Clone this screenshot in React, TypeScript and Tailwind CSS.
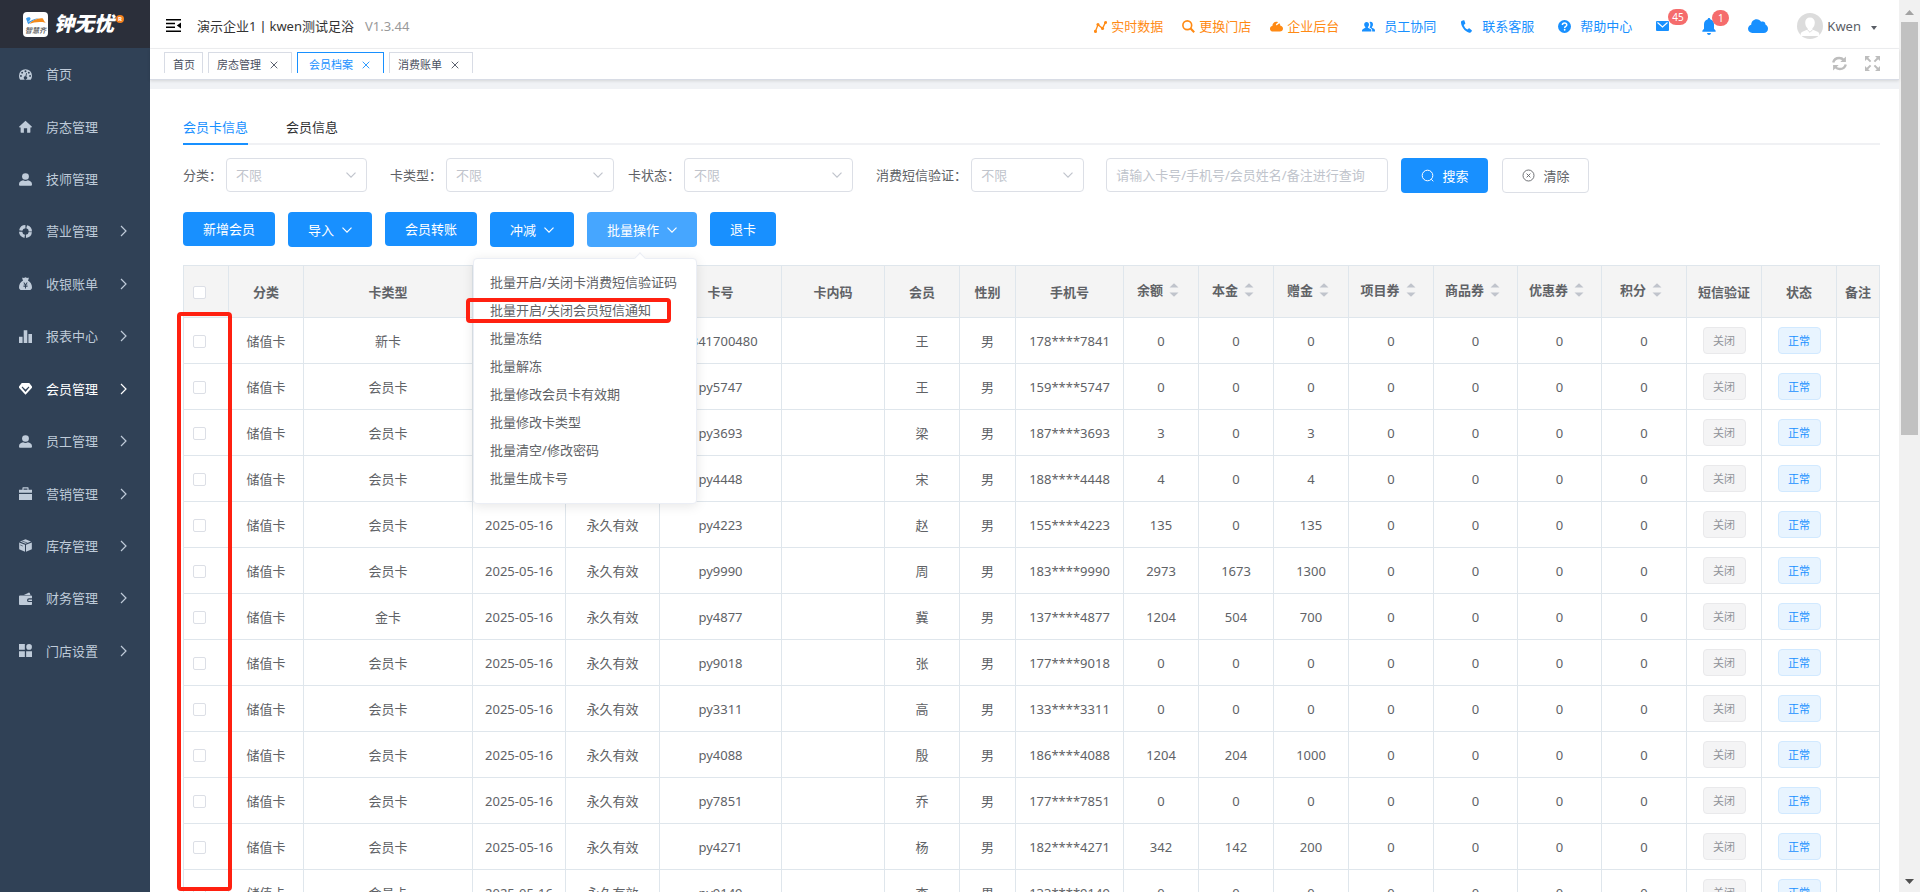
import React, { useState } from 'react';

const svgBase = { viewBox: '0 0 16 16', fill: 'currentColor', 'aria-hidden': true } as const;
type IconProps = { className?: string };

const GaugeIcon = ({ className = 'size-[13px]' }: IconProps) => (
  <svg {...svgBase} className={className}>
    <path
      fillRule="evenodd"
      d="M8 1.4a8 8 0 0 0-8 8c0 1.9.6 3.600 1.500 5h13a8 8 0 0 0 1.500-5 8 8 0 0 0-8-8zM8 2.800a1.200 1.200 0 1 1 0 2.400 1.200 1.200 0 0 1 0-2.400zM3.900 4.500a1.200 1.200 0 1 1 0 2.400 1.200 1.200 0 0 1 0-2.400zM2.400 8.500a1.200 1.200 0 1 1 0 2.400 1.200 1.200 0 0 1 0-2.400zM13.600 8.500a1.200 1.200 0 1 1 0 2.400 1.200 1.200 0 0 1 0-2.400zM12.100 4.500a1.200 1.200 0 1 1 0 2.400 1.200 1.200 0 0 1 0-2.400zM8.800 6.200l1 .3-.8 3.900a2 2 0 1 1-1.100-.3z"
    />
  </svg>
);
const HomeIcon = ({ className = 'size-[13px]' }: IconProps) => (
  <svg {...svgBase} className={className}>
    <path d="M8 .8 16 8.300l-.7.9H14V15a.6.6 0 0 1-.6.6H10V10H6v5.600H2.600A.6.6 0 0 1 2 15V9.200H.7L0 8.300z" />
  </svg>
);
const PersonIcon = ({ className = 'size-[13px]' }: IconProps) => (
  <svg {...svgBase} className={className}>
    <ellipse cx="8" cy="4.300" rx="4.200" ry="4.100" />
    <path d="M0 13.700c0-3 2.600-4.200 5-4.700.9.500 1.900.7 3 .7s2.100-.2 3-.7c2.400.5 5 1.700 5 4.700 0 1.300-.6 2-1.800 2H1.800c-1.200 0-1.800-.7-1.800-2z" />
  </svg>
);
const RingIcon = ({ className = 'size-[13px]' }: IconProps) => (
  <svg viewBox="0 0 16 16" fill="none" stroke="currentColor" aria-hidden className={className}>
    <circle cx="8" cy="8" r="6" strokeWidth="4" strokeDasharray="7.800 1.625" strokeDashoffset="-.8" />
  </svg>
);
const MoneyBagIcon = ({ className = 'size-[13px]' }: IconProps) => (
  <svg {...svgBase} className={className}>
    <path
      fillRule="evenodd"
      d="M4.300.6 6 1.200 8 .3l2 .9 1.700-.6.3 1.600-1 2.100c3 1.500 5 5 5 8.200 0 2.300-1.200 3.500-3.500 3.500h-9C1.200 16 0 14.800 0 12.500 0 9.300 2 5.800 5 4.300L4 2.200zM5.300 6.800l1.800 2.600H5.500v1h1.900v.9H5.500v1h1.900V14h1.200v-1.700h1.900v-1H8.600v-.9h1.900v-1H8.900l1.800-2.600H9.300L8 9 6.700 6.800z"
    />
  </svg>
);
const BarsIcon = ({ className = 'size-[13px]' }: IconProps) => (
  <svg {...svgBase} className={className}>
    <path d="M0 8.200h4.400V16H0zM5.800.4h4.400V16H5.800zM11.600 5h4.400v11h-4.400z" />
  </svg>
);
const DiamondIcon = ({ className = 'size-[13px]' }: IconProps) => (
  <svg {...svgBase} className={className}>
    <path
      fillRule="evenodd"
      d="M3.400 1.200h9.200L16 5.500v1.700L8 15.600 0 7.200V5.500zM4 5.400 3.200 6.500 8 12.200l4.800-5.700-.8-1.100L8 9.200z"
    />
  </svg>
);
const CaseIcon = ({ className = 'size-[13px]' }: IconProps) => (
  <svg {...svgBase} className={className}>
    <path
      fillRule="evenodd"
      d="M4.200 3.400V1.200c0-.5.300-.8.800-.8h6c.5 0 .8.300.8.800v2.200H16v3.800H0V3.400zm1.400 0h4.800V1.800H5.600zM0 8.600h16V16H0z"
    />
  </svg>
);
const CubeIcon = ({ className = 'size-[13px]' }: IconProps) => (
  <svg {...svgBase} className={className}>
    <path d="M8 .2 14.800 3 8 5.900 1.200 3zM.2 4.200l7.200 3v8.600L.2 12.600zM15.800 4.200l-7.200 3v8.600l7.200-3.200z" />
    <path d="M3 2.200 10.500 5M1.500 7.300l3.200 1.400" stroke="#304156" strokeWidth=".8" />
  </svg>
);
const WalletIcon = ({ className = 'size-[13px]' }: IconProps) => (
  <svg {...svgBase} className={className}>
    <path d="M6 3.600 11.800.8c.6-.3 1.200 0 1.400.5l.9 2.300z" />
    <path d="M1.200 4.300H15c.6 0 1 .4 1 1v2.500h-3.800a2.300 2.300 0 0 0 0 4.600H16V15c0 .6-.4 1-1 1H1.200C.4 16 0 15.600 0 15V5.300c0-.6.4-1 1.200-1z" />
    <path d="M12.400 9.100H16v2.100h-3.600a1 1 0 0 1 0-2.100z" />
  </svg>
);
const AppsIcon = ({ className = 'size-[13px]' }: IconProps) => (
  <svg {...svgBase} className={className}>
    <path d="M0 0h7.200v7.200H0zM0 8.800h7.200V16H0zM8.800 8.800H16V16H8.800z" />
    <circle cx="12.400" cy="3.600" r="3.500" />
  </svg>
);
const ChevronRight = ({ className = '' }: IconProps) => (
  <svg viewBox="0 0 7 12" fill="none" stroke="currentColor" strokeWidth="1.200" aria-hidden className={className}>
    <path d="M1 1l5 5-5 5" />
  </svg>
);
const ChevronDown = ({ className = '' }: IconProps) => (
  <svg viewBox="0 0 10 6" fill="none" stroke="currentColor" strokeWidth="1.200" aria-hidden className={className}>
    <path d="M.5.6 5 5.100 9.500.6" />
  </svg>
);
const TrendIcon = ({ className = 'size-[13px]' }: IconProps) => (
  <svg {...svgBase} className={className}>
    <path d="M1.800 13.800 4.900 5.800l5.600 4.500L14 3.200" fill="none" stroke="currentColor" strokeWidth="1.600" />
    <circle cx="1.800" cy="14" r="1.900" />
    <circle cx="4.900" cy="5.600" r="1.900" />
    <circle cx="10.500" cy="10.400" r="1.900" />
    <circle cx="14.200" cy="3" r="1.900" />
  </svg>
);
const SearchBoldIcon = ({ className = 'size-[13px]' }: IconProps) => (
  <svg viewBox="0 0 16 16" fill="none" stroke="currentColor" aria-hidden className={className}>
    <circle cx="6.500" cy="6.500" r="5.400" strokeWidth="2" />
    <path d="M10.600 10.600l4.400 4.400" strokeWidth="2.600" />
  </svg>
);
const CloudIcon = ({ className = 'size-[13px]' }: IconProps) => (
  <svg viewBox="0 0 20 14" fill="currentColor" aria-hidden className={className}>
    <path d="M4.500 14A4.400 4.400 0 0 1 0 9.800C0 7.800 1.400 6.200 3.200 5.700 3.300 2.500 5.600.2 8.600.2c2 0 3.600 1 4.500 2.600.5-.3 1-.4 1.600-.4 1.700 0 2.900 1.400 2.700 3.200C19 6.300 20 7.900 20 9.700 20 12.200 18.200 14 15.700 14z" />
  </svg>
);
const CloudPuffIcon = ({ className = 'size-[13px]' }: IconProps) => (
  <svg {...svgBase} className={className}>
    <path d="M3.800 14.200C1.500 14.200 0 12.800 0 10.700c0-1.800 1.200-3.100 2.900-3.300C3 4.200 5 2.200 7.800 2.200c.8 0 1.500.2 2.100.5L7.200 5.300l.9 1.600 3.400-2.800c.7.7 1.200 1.700 1.300 2.900 1.900.3 3.200 1.700 3.200 3.500 0 2.200-1.600 3.700-3.900 3.700z" />
  </svg>
);
const TeamIcon = ({ className = 'size-[13px]' }: IconProps) => (
  <svg {...svgBase} className={className}>
    <path d="M5.600 2.400c1.900 0 3 1.300 3 3.200 0 1.300-.5 2.400-1.300 3v1l3 1.400c.9.400 1.200 1 1.200 2v1H0v-1c0-1 .5-1.600 1.300-2l2.800-1.400v-1c-.9-.6-1.400-1.700-1.400-3 0-1.900 1.100-3.200 2.900-3.200z" />
    <path d="M9.200 2.600c.4-.2.9-.3 1.400-.3 1.800 0 2.900 1.300 2.900 3.200 0 1.300-.5 2.400-1.300 3v1l2.600 1.400c.8.400 1.200 1 1.200 2V14h-3.500v-1c0-1.500-.6-2.300-1.700-2.900L9.300 9.300c.6-.9 1-2.100 1-3.400 0-1.300-.4-2.400-1.100-3.300z" />
  </svg>
);
const PhoneIcon = ({ className = 'size-[13px]' }: IconProps) => (
  <svg {...svgBase} className={className}>
    <path d="M2.500.8 4.400.2c.5-.1.900.1 1 .5l1.100 3.200c.2.500 0 .9-.4 1.100L4.600 6c.7 2.300 2.300 4.500 4.500 5.700l1.500-1.200c.3-.3.800-.3 1.200 0l2.600 2c.4.300.4.800.1 1.200l-1.200 1.500c-.5.600-1.300.8-2 .5C5.500 13.700 1.500 8.300 1.200 2.800 1.100 1.900 1.600 1.100 2.500.8z" />
  </svg>
);
const HelpIcon = ({ className = 'size-[13px]' }: IconProps) => (
  <svg viewBox="0 0 16 16" aria-hidden className={className}>
    <circle cx="8" cy="8" r="8" fill="currentColor" />
    <path d="M5.400 6.300c0-1.600 1.100-2.600 2.700-2.600s2.700.9 2.700 2.300c0 1.900-2.600 1.900-2.600 3.800" fill="none" stroke="#fff" strokeWidth="1.800" />
    <circle cx="8.200" cy="12" r="1.100" fill="#fff" />
  </svg>
);
const MailIcon = ({ className = '' }: IconProps) => (
  <svg viewBox="0 0 13 10" aria-hidden className={className}>
    <rect width="13" height="10" rx="1" fill="currentColor" />
    <path d="M1.500 1.500l5 4.500 5-4.500" fill="none" stroke="#fff" strokeWidth="1.100" />
  </svg>
);
const BellIcon = ({ className = '' }: IconProps) => (
  <svg viewBox="0 0 14 17" fill="currentColor" aria-hidden className={className}>
    <path d="M7 0c.8 0 1.200.5 1.200 1.200C10.500 1.800 12 3.800 12 6.300v4.500l1.500 1.700c.5.600.3 1.300-.5 1.300H1c-.8 0-1-.7-.5-1.300L2 10.800V6.300c0-2.500 1.500-4.500 3.800-5.100C5.800.5 6.200 0 7 0zM5 15h4c-.2 1.200-.9 1.900-2 1.900S5.200 16.200 5 15z" />
  </svg>
);
const RefreshIcon = ({ className = '' }: IconProps) => (
  <svg viewBox="0 0 15 15" fill="none" stroke="currentColor" aria-hidden className={className}>
    <path d="M1.200 6.500C2 3.500 4.500 2 7.200 2c2 0 3.400.7 4.500 2" strokeWidth="2.400" />
    <path d="M13.800 8.500c-.8 3-3.300 4.500-6 4.500-2 0-3.400-.7-4.500-2" strokeWidth="2.400" />
    <path d="M13.900.5v5.600H8.300zM1.100 14.500V8.900h5.600z" fill="currentColor" stroke="none" />
  </svg>
);
const ExpandIcon = ({ className = '' }: IconProps) => (
  <svg viewBox="0 0 15 15" aria-hidden className={className}>
    <path d="M0 0h5L0 5zM15 0v5l-5-5zM0 15v-5l5 5zM15 15h-5l5-5z" fill="currentColor" />
    <path d="M2 2l3.600 3.600M13 2 9.400 5.600M2 13l3.600-3.600M13 13 9.400 9.400" stroke="currentColor" strokeWidth="2" />
  </svg>
);
const CollapseIcon = ({ className = '' }: IconProps) => (
  <svg viewBox="0 0 15 13" fill="currentColor" aria-hidden className={className}>
    <path d="M0 0h15v1.500H0zM0 3.800h9v1.500H0zM0 7.600h9v1.500H0zM0 11.500h15V13H0zM15 3.400v6.200l-4.200-3.100z" />
  </svg>
);
const CloseIcon = ({ className = 'size-[7px]' }: IconProps) => (
  <svg viewBox="0 0 8 8" fill="none" stroke="currentColor" strokeWidth=".9" aria-hidden className={className}>
    <path d="M.7.7l6.600 6.600M7.300.7.7 7.300" />
  </svg>
);
const AvatarIcon = ({ className = '' }: IconProps) => (
  <svg viewBox="0 0 26 26" aria-hidden className={className}>
    <circle cx="13" cy="13" r="13" fill="#dcdcdc" />
    <path d="M13 4.500c3 0 4.800 2 4.800 5 0 2.500-1 4.600-2.400 5.800v1.300l5.200 2.200c1.200.5 1.800 1.500 1.800 3v1.100H3.600v-1.100c0-1.500.6-2.500 1.800-3l5.200-2.200v-1.300C9.200 14.100 8.200 12 8.200 9.500c0-3 1.800-5 4.800-5z" fill="#fff" />
    <path d="M10.200 16.500 13 19.300l2.800-2.800" fill="none" stroke="#dcdcdc" />
  </svg>
);

const menu = [
  { label: '首页', Icon: GaugeIcon, sub: false },
  { label: '房态管理', Icon: HomeIcon, sub: false },
  { label: '技师管理', Icon: PersonIcon, sub: false },
  { label: '营业管理', Icon: RingIcon, sub: true },
  { label: '收银账单', Icon: MoneyBagIcon, sub: true },
  { label: '报表中心', Icon: BarsIcon, sub: true },
  { label: '会员管理', Icon: DiamondIcon, sub: true },
  { label: '员工管理', Icon: PersonIcon, sub: true },
  { label: '营销管理', Icon: CaseIcon, sub: true },
  { label: '库存管理', Icon: CubeIcon, sub: true },
  { label: '财务管理', Icon: WalletIcon, sub: true },
  { label: '门店设置', Icon: AppsIcon, sub: true },
];

function Sidebar() {
  return (
    <aside className="flex w-[150px] shrink-0 flex-col bg-[#304156]">
      <div className="flex h-12 shrink-0 items-center bg-[#2b2f3a] pl-[23px]">
        <svg viewBox="0 0 25 25" className="size-[25px]" aria-hidden>
          <rect width="25" height="25" rx="4" fill="#fff" />
          <path d="M3 6.500c2-2 5-1.500 4.500.5-.3 1.500-2 2.800-3.800 4 4-2.500 8-4.500 12-4.800-4 1.500-8 3.500-10.500 6z" fill="#3a9bec" />
          <path d="M6 12c4-4 9-6.200 14-5.500.6 1.500 1.300 3 3 4.500-2-.6-3-1-4.500-1C14 9.600 10 10.500 6 12z" fill="#f28a1c" />
          <text x="2" y="21" fontSize="7" fontStyle="italic" fontWeight="700" fill="#666" className="font-['Noto_Sans_CJK_SC',sans-serif]">
            智慧齐
          </text>
        </svg>
        <span className="ml-[6px] text-[20px] leading-6 font-black text-white italic">钟无忧</span>
        <span className="mb-[10px] ml-[2px] flex size-2 items-center justify-center rounded-full bg-[#f5811f] text-[6px] leading-none font-bold text-white">R</span>
      </div>
      <nav className="grid h-[629px] shrink-0 grid-rows-12">
        {menu.map(({ label, Icon, sub }) => (
          <a
            key={label}
            href="#"
            className={`flex items-center pr-[23px] pl-[19px] ${label === '会员管理' ? 'text-white' : 'text-[#bfcbd9]'}`}
          >
            <Icon />
            <span className="ml-[14px]">{label}</span>
            {sub && <ChevronRight className="ml-auto h-3 w-[7px]" />}
          </a>
        ))}
      </nav>
    </aside>
  );
}

function Header() {
  return (
    <header className="flex h-[49px] shrink-0 items-center border-b border-[#f0f1f3] pt-1 pr-[21px] pl-4">
      <button type="button" aria-label="收起菜单" className="mb-[2px] text-black">
        <CollapseIcon className="h-[13px] w-[15px]" />
      </button>
      <span className="ml-4 text-[#333]">演示企业1丨kwen测试足浴</span>
      <span className="ml-[11px] text-[#999]">V1.3.44</span>
      <div className="ml-auto flex items-center">
        <div className="flex items-center gap-[19px] text-[#ff8a14]">
          <a href="#" className="flex items-center gap-1"><TrendIcon />实时数据</a>
          <a href="#" className="flex items-center gap-1"><SearchBoldIcon />更换门店</a>
          <a href="#" className="flex items-center gap-1"><CloudPuffIcon />企业后台</a>
        </div>
        <div className="ml-[23px] flex items-center gap-6 text-[#1890ff]">
          <a href="#" className="flex items-center gap-[9px]"><TeamIcon />员工协同</a>
          <a href="#" className="flex items-center gap-[9px]"><PhoneIcon />联系客服</a>
          <a href="#" className="flex items-center gap-[9px]"><HelpIcon />帮助中心</a>
          <button type="button" aria-label="消息" className="relative">
            <MailIcon className="h-[10px] w-[13px]" />
            <span className="absolute -top-3 left-3 flex h-4 items-center rounded-full bg-[#f56c6c] px-1 text-[10px] leading-4 text-white">45</span>
          </button>
        </div>
        <button type="button" aria-label="通知" className="relative ml-[33px] text-[#1890ff]">
          <BellIcon className="h-[17px] w-[14px]" />
          <span className="absolute -top-2 left-[10px] flex h-4 w-[17px] items-center justify-center rounded-full bg-[#f56c6c] text-[10px] leading-4 text-white">1</span>
        </button>
        <button type="button" aria-label="云端" className="ml-8 text-[#1890ff]">
          <CloudIcon className="h-[14px] w-5" />
        </button>
        <button type="button" className="ml-[29px] flex items-center text-[#5a5e66]">
          <AvatarIcon className="size-[26px]" />
          <span className="ml-1">Kwen</span>
          <svg viewBox="0 0 8 4" className="mt-[3px] ml-[9px] h-1 w-2" fill="currentColor" aria-hidden><path d="M1 0h6L4 4z" /></svg>
        </button>
      </div>
    </header>
  );
}

function TabStrip() {
  const tabs = ['房态管理', '会员档案', '消费账单'];
  return (
    <div className="z-10 flex h-[31px] shrink-0 items-start border-b border-[#d8dce5] bg-white pt-[3px] pr-[19px] pl-[14px] text-[11px] shadow-[0_1px_3px_rgba(0,0,0,0.12)]">
      <a href="#" className="flex h-[21px] items-center border border-b-0 border-[#d8dce5] pt-1 pr-[7px] pl-2 text-[#495060]">首页</a>
      {tabs.map((t) => (
        <a
          key={t}
          href="#"
          className={`ml-[5px] flex h-[21px] items-center border border-b-0 pt-1 ${
            t === '会员档案' ? 'border-[#1890ff] pr-[13px] pl-[11px] text-[#1890ff]' : 'border-[#d8dce5] pr-[13px] pl-2 text-[#495060]'
          }`}
        >
          {t}
          <CloseIcon className="mb-px ml-[9px] size-[8px]" />
        </a>
      ))}
      <div className="ml-auto flex gap-[18px] text-[#bdbdbd]">
        <button type="button" aria-label="刷新" className="pt-1"><RefreshIcon className="size-[15px]" /></button>
        <button type="button" aria-label="全屏" className="pt-1"><ExpandIcon className="size-[15px]" /></button>
      </div>
    </div>
  );
}

function SelectField({ id, label, width }: { id: string; label: string; width: string }) {
  return (
    <div className="flex items-center gap-1">
      <label htmlFor={id} className="whitespace-nowrap text-[#606266]">{label}：</label>
      <div className={`relative ${width}`}>
        <select id={id} className="block h-[34px] w-full appearance-none rounded border border-[#dcdfe6] bg-white px-[9px] text-[#c0c4cc]">
          <option>不限</option>
        </select>
        <ChevronDown className="pointer-events-none absolute top-[14px] right-[11px] h-[6px] w-[10px] text-[#c0c4cc]" />
      </div>
    </div>
  );
}

function Filters() {
  return (
    <form className="mt-[13px] flex items-start" onSubmit={(e) => e.preventDefault()}>
      <SelectField id="category" label="分类" width="w-[141px]" />
      <div className="ml-[23px]"><SelectField id="cardType" label="卡类型" width="w-[168px]" /></div>
      <div className="ml-[14px]"><SelectField id="cardState" label="卡状态" width="w-[169px]" /></div>
      <div className="ml-[23px]"><SelectField id="smsCheck" label="消费短信验证" width="w-[113px]" /></div>
      <input
        aria-label="查询"
        placeholder="请输入卡号/手机号/会员姓名/备注进行查询"
        className="ml-[22px] h-[34px] w-[282px] rounded border border-[#dcdfe6] px-[9px] placeholder:text-[#c0c4cc]"
      />
      <button type="submit" className="ml-[13px] flex h-[35px] w-[87px] items-center justify-center gap-[9px] rounded bg-[#1890ff] text-white">
        <svg viewBox="0 0 13 13" className="size-[13px]" fill="none" stroke="currentColor" aria-hidden>
          <circle cx="6.500" cy="6.500" r="5.300" />
          <path d="M10.300 10.300l2 2" />
        </svg>
        搜索
      </button>
      <button type="reset" className="ml-[14px] flex h-[35px] w-[87px] items-center justify-center gap-[9px] rounded border border-[#dcdfe6] bg-white text-[#606266]">
        <svg viewBox="0 0 13 13" className="size-[13px]" fill="none" stroke="currentColor" strokeWidth=".9" aria-hidden>
          <circle cx="6.500" cy="6.500" r="5.500" />
          <path d="M4.600 4.600l3.800 3.800M8.400 4.600 4.600 8.400" />
        </svg>
        清除
      </button>
    </form>
  );
}

const batchItems = [
  '批量开启/关闭卡消费短信验证码',
  '批量开启/关闭会员短信通知',
  '批量冻结',
  '批量解冻',
  '批量修改会员卡有效期',
  '批量修改卡类型',
  '批量清空/修改密码',
  '批量生成卡号',
];

function Actions() {
  const [open, setOpen] = useState(true);
  const plain = 'h-[34px] rounded bg-[#1890ff] px-5 text-white';
  const drop = 'flex h-[35px] items-center gap-2 rounded px-5 text-white';
  return (
    <div className="mt-[19px] flex items-start gap-[13px]">
      <button type="button" className={plain}>新增会员</button>
      <button type="button" className={`${drop} bg-[#1890ff]`}>导入<ChevronDown className="h-[6px] w-[10px]" /></button>
      <button type="button" className={plain}>会员转账</button>
      <button type="button" className={`${drop} bg-[#1890ff]`}>冲减<ChevronDown className="h-[6px] w-[10px]" /></button>
      <div className="relative z-20">
        <button type="button" onClick={() => setOpen(!open)} className={`${drop} bg-[#46a6ff]`}>
          批量操作<ChevronDown className="h-[6px] w-[10px]" />
        </button>
        {open && (
          <ul className="absolute top-[46px] right-0 w-[224px] rounded border border-[#ebeef5] bg-white pt-[9px] pb-[11px] text-[#606266] shadow-[0_2px_12px_rgba(0,0,0,0.1)]">
            <li aria-hidden className="absolute -top-[5px] left-1/2 ml-[51px] size-2 rotate-45 border-t border-l border-[#ebeef5] bg-white" />
            {batchItems.map((item) => (
              <li key={item}>
                <button type="button" className="block h-7 w-full px-4 text-left whitespace-nowrap">{item}</button>
              </li>
            ))}
            <li aria-hidden className="pointer-events-none absolute top-[39px] -left-2 h-[25px] w-[205px] rounded border-4 border-[#ff2010]" />
          </ul>
        )}
      </div>
      <button type="button" className={plain}>退卡</button>
    </div>
  );
}

const columns: { label: string; width: string; sort?: boolean }[] = [
  { label: '分类', width: 'w-[75px]' },
  { label: '卡类型', width: 'w-[169px]' },
  { label: '开卡日期', width: 'w-[93px]' },
  { label: '有效期', width: 'w-[94px]' },
  { label: '卡号', width: 'w-[122px]' },
  { label: '卡内码', width: 'w-[103px]' },
  { label: '会员', width: 'w-[75px]' },
  { label: '性别', width: 'w-[56px]' },
  { label: '手机号', width: 'w-[108px]' },
  { label: '余额', width: 'w-[75px]', sort: true },
  { label: '本金', width: 'w-[75px]', sort: true },
  { label: '赠金', width: 'w-[75px]', sort: true },
  { label: '项目券', width: 'w-[85px]', sort: true },
  { label: '商品券', width: 'w-[84px]', sort: true },
  { label: '优惠券', width: 'w-[84px]', sort: true },
  { label: '积分', width: 'w-[85px]', sort: true },
  { label: '短信验证', width: 'w-[75px]' },
  { label: '状态', width: 'w-[75px]' },
  { label: '备注', width: 'w-[43px]' },
];

const rows: [string, string, string, string, number, number, number][] = [
  ['新卡', '1341700480', '王', '178****7841', 0, 0, 0],
  ['会员卡', 'py5747', '王', '159****5747', 0, 0, 0],
  ['会员卡', 'py3693', '梁', '187****3693', 3, 0, 3],
  ['会员卡', 'py4448', '宋', '188****4448', 4, 0, 4],
  ['会员卡', 'py4223', '赵', '155****4223', 135, 0, 135],
  ['会员卡', 'py9990', '周', '183****9990', 2973, 1673, 1300],
  ['金卡', 'py4877', '冀', '137****4877', 1204, 504, 700],
  ['会员卡', 'py9018', '张', '177****9018', 0, 0, 0],
  ['会员卡', 'py3311', '高', '133****3311', 0, 0, 0],
  ['会员卡', 'py4088', '殷', '186****4088', 1204, 204, 1000],
  ['会员卡', 'py7851', '乔', '177****7851', 0, 0, 0],
  ['会员卡', 'py4271', '杨', '182****4271', 342, 142, 200],
  ['会员卡', 'py9149', '李', '133****9149', 0, 0, 0],
];

const checkbox = 'mt-[2px] block size-[13px] appearance-none rounded-[2px] border border-[#dcdfe6] bg-white checked:bg-[#1890ff]';
const tag = 'inline-flex h-[27px] w-[43px] items-center justify-center rounded border align-middle text-[11px]';

function MemberTable() {
  return (
    <div className="relative mt-[18px]">
      <table className="w-full table-fixed border-separate border-spacing-0 border-t border-l border-[#dfe6ec] text-center text-[#606266] [&_td]:border-r [&_td]:border-b [&_td]:border-[#dfe6ec] [&_th]:border-r [&_th]:border-b [&_th]:border-[#dfe6ec]">
        <thead>
          <tr className="h-[52px] bg-[#f4f4f4]">
            <th className="w-[45px] pl-[9px]"><input type="checkbox" aria-label="全选" className={checkbox} /></th>
            {columns.map((c) => (
              <th key={c.label} className={`${c.width} p-0 font-bold whitespace-nowrap`}>
                {c.sort ? (
                  <button type="button" className="inline-flex items-center pb-1 align-middle">
                    {c.label}
                    <svg viewBox="0 0 22 14" className="h-[14px] w-[22px]" fill="#c0c4cc" aria-hidden>
                      <path d="M6.500 4.500 11 .3l4.500 4.200zM6.500 9.500h9L11 13.700z" />
                    </svg>
                  </button>
                ) : (
                  c.label
                )}
              </th>
            ))}
          </tr>
        </thead>
        <tbody>
          {rows.map(([type, card, name, phone, balance, principal, gift]) => (
            <tr key={card} className="h-[46px]">
              <td className="pl-[9px]"><input type="checkbox" aria-label={card} className={checkbox} /></td>
              <td>储值卡</td>
              <td>{type}</td>
              <td className="whitespace-nowrap">2025-05-16</td>
              <td>永久有效</td>
              <td>{card}</td>
              <td />
              <td>{name}</td>
              <td>男</td>
              <td>{phone}</td>
              <td>{balance}</td>
              <td>{principal}</td>
              <td>{gift}</td>
              <td>0</td>
              <td>0</td>
              <td>0</td>
              <td>0</td>
              <td><span className={`${tag} border-[#e9e9eb] bg-[#f4f4f5] text-[#909399]`}>关闭</span></td>
              <td><span className={`${tag} border-[#d1e9ff] bg-[#e8f4ff] text-[#1890ff]`}>正常</span></td>
              <td />
            </tr>
          ))}
        </tbody>
      </table>
      <div aria-hidden className="pointer-events-none absolute top-[47px] -left-[6px] h-[579px] w-[55px] rounded border-4 border-[#ff2010]" />
    </div>
  );
}

export default function App() {
  return (
    <div className="flex h-screen w-full overflow-hidden bg-white font-['Noto_Sans','Noto_Sans_CJK_SC',sans-serif] text-[13px] leading-5">
      <Sidebar />
      <div className="flex min-w-0 flex-1 flex-col">
        <Header />
        <TabStrip />
        <div className="h-[9px] shrink-0 bg-[#f0f2f5]" />
        <main className="min-h-0 flex-1 overflow-hidden pr-[19px] pl-[33px]">
          <div className="mt-[26px] flex h-[30px] gap-[38px] border-b-2 border-[#f0f1f4]">
            <a href="#" className="-mb-[2px] h-[30px] border-b-2 border-[#1890ff] pt-[2px] text-[#1890ff]">会员卡信息</a>
            <a href="#" className="pt-[2px] text-[#303133]">会员信息</a>
          </div>
          <Filters />
          <Actions />
          <MemberTable />
        </main>
      </div>
      <div aria-hidden className="flex w-[21px] shrink-0 flex-col items-center bg-[#f1f1f1]">
        <svg viewBox="0 0 9 5" className="mt-[10px] h-[5px] w-[9px]" fill="#a3a3a3"><path d="M0 5h9L4.500 0z" /></svg>
        <div className="mt-[7px] h-[413px] w-[17px] bg-[#c1c1c1]" />
        <svg viewBox="0 0 9 5" className="mt-auto mb-2 h-[5px] w-[9px]" fill="#505050"><path d="M0 0h9L4.500 5z" /></svg>
      </div>
    </div>
  );
}
